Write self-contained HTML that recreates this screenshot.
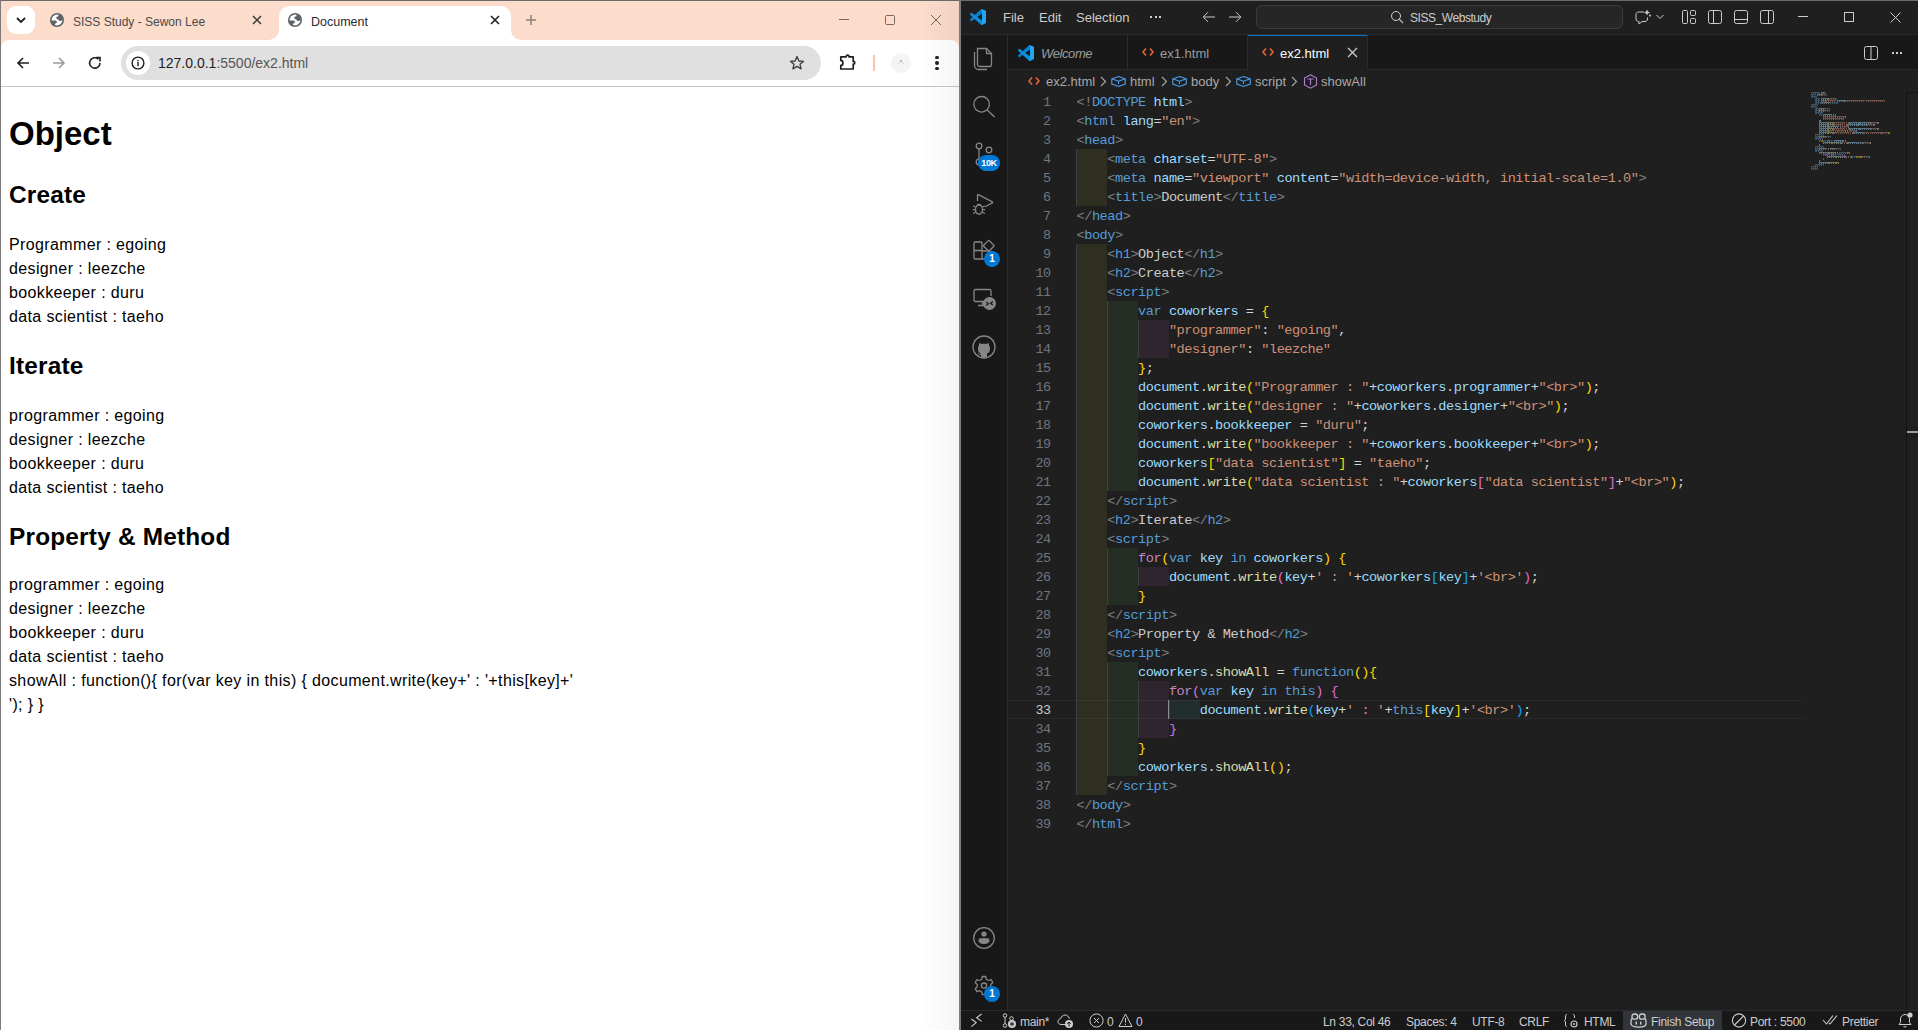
<!DOCTYPE html>
<html><head><meta charset="utf-8"><title>screen</title>
<style>
*{box-sizing:border-box;margin:0;padding:0}
html,body{width:1918px;height:1030px;overflow:hidden;background:#fff;font-family:"Liberation Sans",sans-serif}
.a{position:absolute}
svg{position:absolute;overflow:visible}
/* chrome */
#chrome{position:absolute;left:0;top:0;width:959px;height:1030px;background:#fff;overflow:hidden}
.peach{background:#fcdccb}
.pt{position:absolute;left:9px;white-space:pre;color:#000;line-height:24px;letter-spacing:0.37px}
/* vscode */
.vt{position:absolute;white-space:pre;font-size:13px;line-height:16px;color:#cccccc}
.ln{position:absolute;left:1001.5px;width:49px;height:19px;line-height:19px;font-family:"Liberation Mono",monospace;font-size:13.4px;letter-spacing:-0.5px;text-align:right}
.cl{position:absolute;height:19px;line-height:19px;white-space:pre;font-family:"Liberation Mono",monospace;font-size:13.6px;letter-spacing:-0.46px}
.ir{position:absolute;height:19px}
.mm{height:2px;background:repeating-linear-gradient(90deg,currentColor 0 1px,transparent 1px 2px),linear-gradient(currentColor,currentColor);background-size:auto,100% 1px;background-repeat:repeat,no-repeat;opacity:.45}
.ig{position:absolute;width:1px;height:19px;background:#404040}
.sb{position:absolute;top:1012px;height:20px;line-height:20px;font-size:12px;letter-spacing:-0.3px;color:#cccccc;white-space:pre}
</style></head><body>

<!-- ================= CHROME ================= -->
<div id="chrome">
  <div class="a peach" style="left:0;top:0;width:959px;height:50px"></div>

  <!-- tab search button -->
  <div class="a" style="left:7px;top:6px;width:28px;height:28px;border-radius:9px;background:#fff"></div>
  <svg style="left:15px;top:14px" width="12" height="12" viewBox="0 0 12 12"><path d="M2 4 L6 8 L10 4" fill="none" stroke="#1f1f1f" stroke-width="1.8"/></svg>

  <!-- inactive tab -->
  <svg style="left:50px;top:13px" width="14" height="14" viewBox="0 0 14 14"><defs><clipPath id="g1"><circle cx="7" cy="7" r="7"/></clipPath></defs><circle cx="7" cy="7" r="7" fill="#5f6368"/><circle cx="7" cy="7" r="5.4" fill="#fff"/><g clip-path="url(#g1)" fill="#5f6368"><path d="M8.6 1 L8.4 3.2 C7.2 3.4 6.2 3.9 6.2 5 C6.2 6 7.6 6.1 8.4 6.8 C9.2 7.6 9.6 8.4 10.6 8 L13.5 6.6 L13.5 1 Z"/><path d="M0.5 7.6 L5 7.6 C6.2 7.6 6.9 8.2 6.9 9 C6.9 9.8 6.2 10.2 5.2 10.4 L4.6 13.5 L0.5 13.5 Z"/></g></svg>
  <div class="a" style="left:73px;top:14px;font-size:12px;line-height:16px;color:#4a4a4a;white-space:pre">SISS Study - Sewon Lee</div>
  <svg style="left:252px;top:15px" width="10" height="10" viewBox="0 0 10 10"><path d="M1 1 L9 9 M9 1 L1 9" stroke="#3c3c3c" stroke-width="1.5"/></svg>

  <!-- active tab -->
  <div class="a" style="left:269px;top:30px;width:252px;height:12px;background:#fff"></div>
  <div class="a peach" style="left:267px;top:0;width:12px;height:40px;border-bottom-right-radius:10px"></div>
  <div class="a peach" style="left:511px;top:0;width:12px;height:40px;border-bottom-left-radius:10px"></div>
  <div class="a" style="left:279px;top:6px;width:232px;height:40px;border-radius:10px 10px 0 0;background:#fff"></div>
  <svg style="left:288px;top:13px" width="14" height="14" viewBox="0 0 14 14"><defs><clipPath id="g2"><circle cx="7" cy="7" r="7"/></clipPath></defs><circle cx="7" cy="7" r="7" fill="#5f6368"/><circle cx="7" cy="7" r="5.4" fill="#fff"/><g clip-path="url(#g2)" fill="#5f6368"><path d="M8.6 1 L8.4 3.2 C7.2 3.4 6.2 3.9 6.2 5 C6.2 6 7.6 6.1 8.4 6.8 C9.2 7.6 9.6 8.4 10.6 8 L13.5 6.6 L13.5 1 Z"/><path d="M0.5 7.6 L5 7.6 C6.2 7.6 6.9 8.2 6.9 9 C6.9 9.8 6.2 10.2 5.2 10.4 L4.6 13.5 L0.5 13.5 Z"/></g></svg>
  <div class="a" style="left:311px;top:13.5px;font-size:12.5px;line-height:16px;color:#2a2a2a;white-space:pre">Document</div>
  <svg style="left:490px;top:15px" width="10" height="10" viewBox="0 0 10 10"><path d="M1 1 L9 9 M9 1 L1 9" stroke="#1f1f1f" stroke-width="1.6"/></svg>

  <!-- new tab + -->
  <svg style="left:525px;top:14px" width="12" height="12" viewBox="0 0 12 12"><path d="M6 1 V11 M1 6 H11" stroke="#8a7f7a" stroke-width="1.5"/></svg>

  <!-- window controls -->
  <div class="a" style="left:839px;top:19px;width:10px;height:1px;background:#75675f"></div>
  <div class="a" style="left:885px;top:15px;width:10px;height:10px;border:1px solid #75675f;border-radius:1.5px"></div>
  <svg style="left:931px;top:15px" width="10" height="10" viewBox="0 0 10 10"><path d="M0 0 L10 10 M10 0 L0 10" stroke="#75675f" stroke-width="1"/></svg>

  <!-- toolbar -->
  <div class="a" style="left:1px;top:40px;width:958px;height:47px;background:#fff;border-radius:8px 8px 0 0"></div>
  <div class="a" style="left:1px;top:86px;width:958px;height:1px;background:#c7c7c7"></div>

  <!-- back / fwd / reload -->
  <svg style="left:15px;top:55px" width="16" height="16" viewBox="0 0 16 16"><path d="M14 8 H3 M8 3 L3 8 L8 13" fill="none" stroke="#1f1f1f" stroke-width="1.6"/></svg>
  <svg style="left:51px;top:55px" width="16" height="16" viewBox="0 0 16 16"><path d="M2 8 H13 M8 3 L13 8 L8 13" fill="none" stroke="#9a9a9a" stroke-width="1.6"/></svg>
  <svg style="left:88px;top:56px" width="14" height="14" viewBox="0 0 14 14"><path d="M12 7 A5.2 5.2 0 1 1 10.4 3.2" fill="none" stroke="#1f1f1f" stroke-width="1.6"/><path d="M8.2 1.6 H12 V5.4" fill="none" stroke="#1f1f1f" stroke-width="1.6"/></svg>

  <!-- omnibox -->
  <div class="a" style="left:121px;top:46px;width:700px;height:34px;border-radius:17px;background:#e0e0e0"></div>
  <div class="a" style="left:126px;top:51px;width:24px;height:24px;border-radius:12px;background:#fff"></div>
  <svg style="left:131px;top:56px" width="14" height="14" viewBox="0 0 14 14"><circle cx="7" cy="7" r="5.9" fill="none" stroke="#1f1f1f" stroke-width="1.4"/><rect x="6.3" y="6" width="1.4" height="4.2" fill="#1f1f1f"/><rect x="6.3" y="3.8" width="1.4" height="1.4" fill="#1f1f1f"/></svg>
  <div class="a" style="left:158px;top:55px;font-size:14px;line-height:16px;white-space:pre"><span style="color:#1f1f1f">127.0.0.1</span><span style="color:#555">:5500/ex2.html</span></div>
  <svg style="left:789px;top:55px" width="16" height="16" viewBox="0 0 16 16"><path d="M8 1.6 L9.9 6 L14.6 6.3 L11 9.3 L12.1 13.9 L8 11.4 L3.9 13.9 L5 9.3 L1.4 6.3 L6.1 6 Z" fill="none" stroke="#3c3c3c" stroke-width="1.3" stroke-linejoin="round"/></svg>

  <!-- extensions / separator / profile / menu -->
  <svg style="left:839px;top:54px" width="17" height="17" viewBox="0 0 17 17"><path d="M1.8 2.8 H7.2 C7.2 1.8 7.8 1.2 8.6 1.2 C9.4 1.2 10 1.8 10 2.8 H14.2 V7.4 C15.2 7.4 15.8 8 15.8 8.8 C15.8 9.6 15.2 10.2 14.2 10.2 V15 H1.8 V11.4 C3.2 11.4 3.9 10.3 3.9 8.9 C3.9 7.5 3.2 6.4 1.8 6.4 Z" fill="none" stroke="#1f1f1f" stroke-width="1.7" stroke-linejoin="round"/></svg>
  <div class="a" style="left:873px;top:55px;width:1.5px;height:16px;background:#f6c7ad"></div>
  <div class="a" style="left:891px;top:53px;width:20px;height:20px;border-radius:10px;background:#f4f4f4"></div>
  <svg style="left:896px;top:58px" width="10" height="8" viewBox="0 0 10 8"><path d="M2 6 L5 3 L8 6" fill="none" stroke="#dcc4c4" stroke-width="0.7"/><circle cx="5" cy="3" r="0.8" fill="#b06060"/></svg>
  <div class="a" style="left:935.4px;top:55.7px;width:3.2px;height:3.2px;border-radius:2px;background:#1f1f1f"></div>
  <div class="a" style="left:935.4px;top:61.4px;width:3.2px;height:3.2px;border-radius:2px;background:#1f1f1f"></div>
  <div class="a" style="left:935.4px;top:67.1px;width:3.2px;height:3.2px;border-radius:2px;background:#1f1f1f"></div>

  <!-- right-edge shade -->
  <div class="a" style="left:920px;top:1px;width:39px;height:1029px;background:linear-gradient(90deg,rgba(0,0,0,0),rgba(0,0,0,0.04))"></div>

  <!-- page content -->
<div class="pt" style="top:113.5px;font-size:33px;font-weight:bold;line-height:40px;letter-spacing:0">Object</div>
<div class="pt" style="top:180px;font-size:24.4px;font-weight:bold;line-height:30px;letter-spacing:0.2px">Create</div>
<div class="pt" style="top:232.5px;font-size:16px;font-weight:normal">Programmer : egoing</div>
<div class="pt" style="top:256.5px;font-size:16px;font-weight:normal">designer : leezche</div>
<div class="pt" style="top:280.5px;font-size:16px;font-weight:normal">bookkeeper : duru</div>
<div class="pt" style="top:304.5px;font-size:16px;font-weight:normal">data scientist : taeho</div>
<div class="pt" style="top:351px;font-size:24.4px;font-weight:bold;line-height:30px;letter-spacing:0.2px">Iterate</div>
<div class="pt" style="top:403.5px;font-size:16px;font-weight:normal">programmer : egoing</div>
<div class="pt" style="top:427.5px;font-size:16px;font-weight:normal">designer : leezche</div>
<div class="pt" style="top:451.5px;font-size:16px;font-weight:normal">bookkeeper : duru</div>
<div class="pt" style="top:475.5px;font-size:16px;font-weight:normal">data scientist : taeho</div>
<div class="pt" style="top:522px;font-size:24.4px;font-weight:bold;line-height:30px;letter-spacing:0.2px">Property &amp; Method</div>
<div class="pt" style="top:572.5px;font-size:16px;font-weight:normal">programmer : egoing</div>
<div class="pt" style="top:596.5px;font-size:16px;font-weight:normal">designer : leezche</div>
<div class="pt" style="top:620.5px;font-size:16px;font-weight:normal">bookkeeper : duru</div>
<div class="pt" style="top:644.5px;font-size:16px;font-weight:normal">data scientist : taeho</div>
<div class="pt" style="top:668.5px;font-size:16px;font-weight:normal">showAll : function(){ for(var key in this) { document.write(key+' : '+this[key]+'</div>
<div class="pt" style="top:692.5px;font-size:16px;font-weight:normal">'); } }</div>
  <!-- window top/left border -->
  <div class="a" style="left:0;top:0;width:959px;height:1px;background:#6b6b6b"></div>
  <div class="a" style="left:0;top:0;width:1px;height:1030px;background:#7a7a7a"></div>
</div>

<!-- ================= VS CODE ================= -->
<div class="a" style="left:959px;top:0;width:2px;height:1030px;background:#7d7d7d"></div>
<div class="a" style="left:961px;top:0;width:957px;height:1px;background:#6b6b6b"></div>
<div class="a" style="left:961px;top:1px;width:957px;height:1029px;background:#1f1f1f"></div>
<!-- title bar -->
<svg style="left:970px;top:9px" width="16" height="16" viewBox="0 0 100 100"><path d="M96.46 10.8L75.86 0.87C73.47-0.28 70.62 0.2 68.75 2.08L1.3 63.58C-0.52 65.23-0.52 68.1 1.3 69.76L6.81 74.77C8.3 76.12 10.53 76.22 12.13 75.01L93.36 13.37C96.09 11.3 100 13.25 100 16.67V16.43C100 14.03 98.62 11.84 96.46 10.8Z" fill="#0a7fd0"/><path d="M96.46 89.2L75.86 99.13C73.47 100.28 70.62 99.8 68.75 97.92L1.3 36.42C-0.52 34.77-0.52 31.9 1.3 30.24L6.81 25.23C8.3 23.88 10.53 23.78 12.13 24.99L93.36 86.63C96.09 88.7 100 86.75 100 83.33V83.57C100 85.97 98.62 88.16 96.46 89.2Z" fill="#0c8ee0"/><path d="M75.86 99.13C73.47 100.28 70.62 99.8 68.75 97.92C71.06 100.23 75 98.6 75 95.33V4.67C75 1.4 71.06-0.23 68.75 2.08C70.62 0.2 73.47-0.28 75.86 0.87L96.46 10.79C98.62 11.83 100 14.02 100 16.42V83.58C100 85.98 98.62 88.17 96.46 89.21L75.86 99.13Z" fill="#22a6f2"/></svg>
<div class="vt" style="left:1003px;top:10px">File</div>
<div class="vt" style="left:1039px;top:10px">Edit</div>
<div class="vt" style="left:1076px;top:10px">Selection</div>
<div class="a" style="left:1150px;top:16px;width:2px;height:2px;background:#cccccc"></div>
<div class="a" style="left:1154.5px;top:16px;width:2px;height:2px;background:#cccccc"></div>
<div class="a" style="left:1159px;top:16px;width:2px;height:2px;background:#cccccc"></div>
<svg style="left:1202px;top:11px" width="14" height="12" viewBox="0 0 14 12"><path d="M13 6 H1.5 M6 1.2 L1.2 6 L6 10.8" fill="none" stroke="#cccccc" stroke-width="1"/></svg>
<svg style="left:1228px;top:11px" width="14" height="12" viewBox="0 0 14 12"><path d="M1 6 H12.5 M8 1.2 L12.8 6 L8 10.8" fill="none" stroke="#cccccc" stroke-width="1"/></svg>
<div class="a" style="left:1256px;top:5px;width:367px;height:24px;border:1px solid #3c3c3c;border-radius:6px;background:#262626"></div>
<svg style="left:1390px;top:10px" width="14" height="14" viewBox="0 0 14 14"><circle cx="6" cy="6" r="4.5" fill="none" stroke="#cccccc" stroke-width="1"/><path d="M9.2 9.2 L13 13" stroke="#cccccc" stroke-width="1.1"/></svg>
<div class="vt" style="left:1410px;top:10px;font-size:12px;letter-spacing:-0.45px">SISS_Webstudy</div>
<!-- copilot -->
<svg style="left:1634px;top:9px" width="32" height="16" viewBox="0 0 32 16"><path d="M10 3 H4.5 C3.1 3 2 4.1 2 5.5 V10 C2 11.4 3.1 12.5 4.5 12.5 H5 V15 L8 12.5 H11 C12.4 12.5 13.5 11.4 13.5 10 V8.5" fill="none" stroke="#cccccc" stroke-width="1"/><path d="M13 0.5 L13.9 2.6 L16 3.5 L13.9 4.4 L13 6.5 L12.1 4.4 L10 3.5 L12.1 2.6 Z" fill="#cccccc"/><path d="M16 5 L17 6.5 L16 8 L15 6.5 Z" fill="#cccccc"/><path d="M22.5 6 L26 9.5 L29.5 6" fill="none" stroke="#cccccc" stroke-width="1"/></svg>
<!-- layout icons -->
<svg style="left:1681px;top:9px" width="16" height="16" viewBox="0 0 16 16"><rect x="1.5" y="1.5" width="5" height="13" rx="1" fill="none" stroke="#cccccc"/><rect x="9.5" y="1.5" width="5" height="5" rx="1" fill="none" stroke="#cccccc"/><rect x="9.5" y="9.5" width="5" height="5" rx="1" fill="none" stroke="#cccccc"/></svg>
<svg style="left:1707px;top:9px" width="16" height="16" viewBox="0 0 16 16"><rect x="1.5" y="1.5" width="13" height="13" rx="2" fill="none" stroke="#cccccc"/><path d="M6.5 1.5 V14.5" stroke="#cccccc"/></svg>
<svg style="left:1733px;top:9px" width="16" height="16" viewBox="0 0 16 16"><rect x="1.5" y="1.5" width="13" height="13" rx="2" fill="none" stroke="#cccccc"/><path d="M1.5 10.5 H14.5" stroke="#cccccc"/></svg>
<svg style="left:1759px;top:9px" width="16" height="16" viewBox="0 0 16 16"><rect x="1.5" y="1.5" width="13" height="13" rx="2" fill="none" stroke="#cccccc"/><path d="M9.5 1.5 V14.5" stroke="#cccccc"/></svg>
<!-- window controls -->
<div class="a" style="left:1798px;top:16px;width:10px;height:1px;background:#cccccc"></div>
<div class="a" style="left:1844px;top:12px;width:10px;height:10px;border:1px solid #cccccc"></div>
<svg style="left:1890px;top:12px" width="11" height="11" viewBox="0 0 11 11"><path d="M0.5 0.5 L10.5 10.5 M10.5 0.5 L0.5 10.5" stroke="#cccccc" stroke-width="1"/></svg>
<div class="a" style="left:961px;top:34px;width:957px;height:1px;background:#2b2b2b"></div>

<!-- activity bar -->
<div class="a" style="left:961px;top:35px;width:46px;height:975px;background:#181818"></div>
<div class="a" style="left:1007px;top:35px;width:1px;height:975px;background:#2b2b2b"></div>

<svg style="left:972px;top:44px" width="24" height="26" viewBox="0 0 24 26"><path d="M5.5 4.5 H14.5 L19.5 9.5 V20.5 C19.5 21.6 18.6 22.5 17.5 22.5 H7.5 C6.4 22.5 5.5 21.6 5.5 20.5 Z" fill="none" stroke="#868686" stroke-width="1.3"/><path d="M14.5 4.5 V9.5 H19.5" fill="none" stroke="#868686" stroke-width="1.3"/><path d="M2.5 8 V21.5 C2.5 23.7 4.3 25.5 6.5 25.5 H15" fill="none" stroke="#868686" stroke-width="1.3"/></svg>
<svg style="left:972px;top:94px" width="24" height="24" viewBox="0 0 24 24"><circle cx="9.6" cy="10.3" r="7.8" fill="none" stroke="#868686" stroke-width="1.3"/><path d="M15.2 15.9 L22.6 23" stroke="#868686" stroke-width="1.4"/></svg>
<svg style="left:972px;top:142px" width="24" height="24" viewBox="0 0 24 24"><circle cx="7" cy="4" r="2.8" fill="none" stroke="#868686" stroke-width="1.3"/><circle cx="17" cy="8" r="2.8" fill="none" stroke="#868686" stroke-width="1.3"/><circle cx="7" cy="20" r="2.8" fill="none" stroke="#868686" stroke-width="1.3"/><path d="M7 6.8 V17.2" stroke="#868686" stroke-width="1.3"/></svg>
<div class="a" style="left:978px;top:155px;width:22px;height:16px;border-radius:8px;background:#0078d4;color:#fff;font-size:9px;line-height:16px;font-weight:bold;text-align:center;letter-spacing:-0.4px">10K</div>
<svg style="left:972px;top:190px" width="24" height="24" viewBox="0 0 24 24"><path d="M5.5 11 V5.2 Q5.5 4.2 6.4 4.7 L20.3 11.8 Q21 12.4 20.3 12.9 L13.2 16.8" fill="none" stroke="#868686" stroke-width="1.3" stroke-linejoin="round"/><ellipse cx="7" cy="19.6" rx="3.5" ry="4.5" fill="none" stroke="#868686" stroke-width="1.3"/><path d="M4.6 15.6 Q7 13.2 9.4 15.6 M1.2 15.8 L3.8 17.3 M1.2 23.6 L3.8 22 M12.8 15.8 L10.2 17.3 M12.8 23.6 L10.2 22 M0.8 19.6 H3.5 M10.5 19.6 H13.2" fill="none" stroke="#868686" stroke-width="1.2"/></svg>
<svg style="left:972px;top:239px" width="24" height="24" viewBox="0 0 24 24"><path d="M3.2 3 H8.8 Q10 3 10 4.2 V20 H3.2 Q2 20 2 18.8 V4.2 Q2 3 3.2 3 Z M2 11.5 H10 M10 12 H17.8 Q19 12 19 13.2 V18.8 Q19 20 17.8 20 H10" fill="none" stroke="#868686" stroke-width="1.3"/><path d="M16.3 1.6 Q16.8 1.1 17.3 1.6 L21.9 6.2 Q22.4 6.7 21.9 7.2 L17.3 11.8 Q16.8 12.3 16.3 11.8 L11.7 7.2 Q11.2 6.7 11.7 6.2 Z" fill="none" stroke="#868686" stroke-width="1.3"/></svg>
<div class="a" style="left:984px;top:251px;width:16px;height:16px;border-radius:8px;background:#0078d4;color:#fff;font-size:10px;line-height:16px;font-weight:bold;text-align:center">1</div>
<svg style="left:972px;top:287px" width="24" height="24" viewBox="0 0 24 24"><path d="M13 14.5 H3.5 C2.7 14.5 2 13.8 2 13 V4 C2 3.2 2.7 2.5 3.5 2.5 H17.5 C18.3 2.5 19 3.2 19 4 V9" fill="none" stroke="#868686" stroke-width="1.3"/><path d="M10.5 14.5 V18.5 M6 18.5 H13" stroke="#868686" stroke-width="1.3"/><circle cx="17.5" cy="16.5" r="6.5" fill="#868686"/><path d="M14.2 15 L16.4 16.8 L14.2 18.6 M20.8 14.4 L18.6 16.2 L20.8 18" fill="none" stroke="#181818" stroke-width="1.3"/></svg>
<svg style="left:972px;top:335px" width="24" height="24" viewBox="0 0 24 24"><circle cx="12" cy="12" r="11" fill="none" stroke="#868686" stroke-width="1.3"/><path d="M9 22.5 V18.5 C7.5 18.2 6 17 6 13.5 C6 12.2 6.4 11.3 7.1 10.6 C6.9 10 6.8 9 7.2 8 C7.2 8 8.2 8 9.6 9.1 C11.1 8.7 12.9 8.7 14.4 9.1 C15.8 8 16.8 8 16.8 8 C17.2 9 17.1 10 16.9 10.6 C17.6 11.3 18 12.2 18 13.5 C18 17 16.5 18.2 15 18.5 V22.5 Z" fill="#868686"/><path d="M9 19.5 C7.5 20 6.5 19 6 18" fill="none" stroke="#868686" stroke-width="1"/></svg>
<svg style="left:972px;top:926px" width="24" height="24" viewBox="0 0 24 24"><circle cx="12" cy="12" r="10.3" fill="none" stroke="#868686" stroke-width="1.3"/><circle cx="12" cy="8" r="2.6" fill="#868686"/><path d="M6.5 14.5 C6.5 12.8 7.5 12.3 9 12.3 H15 C16.5 12.3 17.5 12.8 17.5 14.5 C17.5 16.5 15 18 12 18 C9 18 6.5 16.5 6.5 14.5 Z" fill="#868686"/></svg>
<svg style="left:972px;top:974px" width="24" height="24" viewBox="0 0 24 24"><path d="M10.3 2.5 H13.7 L14.3 5.3 L16.4 6.5 L19.1 5.6 L20.8 8.5 L18.7 10.4 V12.8 L20.8 14.7 L19.1 17.6 L16.4 16.7 L14.3 17.9 L13.7 20.7 H10.3 L9.7 17.9 L7.6 16.7 L4.9 17.6 L3.2 14.7 L5.3 12.8 V10.4 L3.2 8.5 L4.9 5.6 L7.6 6.5 L9.7 5.3 Z" fill="none" stroke="#868686" stroke-width="1.3" stroke-linejoin="round"/><circle cx="12" cy="11.6" r="2.6" fill="none" stroke="#868686" stroke-width="1.3"/></svg>
<div class="a" style="left:984px;top:986px;width:16px;height:16px;border-radius:8px;background:#0078d4;color:#fff;font-size:10px;line-height:16px;font-weight:bold;text-align:center">1</div>


<!-- tab bar -->
<div class="a" style="left:1008px;top:35px;width:910px;height:34px;background:#181818"></div>
<div class="a" style="left:1008px;top:69px;width:910px;height:1px;background:#2b2b2b"></div>
<!-- tab Welcome -->
<div class="a" style="left:1127px;top:35px;width:1px;height:34px;background:#2b2b2b"></div>
<svg style="left:1018px;top:45px" width="16" height="16" viewBox="0 0 100 100"><path d="M96.46 10.8L75.86 0.87C73.47-0.28 70.62 0.2 68.75 2.08L1.3 63.58C-0.52 65.23-0.52 68.1 1.3 69.76L6.81 74.77C8.3 76.12 10.53 76.22 12.13 75.01L93.36 13.37C96.09 11.3 100 13.25 100 16.67V16.43C100 14.03 98.62 11.84 96.46 10.8Z" fill="#0a7fd0"/><path d="M96.46 89.2L75.86 99.13C73.47 100.28 70.62 99.8 68.75 97.92L1.3 36.42C-0.52 34.77-0.52 31.9 1.3 30.24L6.81 25.23C8.3 23.88 10.53 23.78 12.13 24.99L93.36 86.63C96.09 88.7 100 86.75 100 83.33V83.57C100 85.97 98.62 88.16 96.46 89.2Z" fill="#0c8ee0"/><path d="M75.86 99.13C73.47 100.28 70.62 99.8 68.75 97.92C71.06 100.23 75 98.6 75 95.33V4.67C75 1.4 71.06-0.23 68.75 2.08C70.62 0.2 73.47-0.28 75.86 0.87L96.46 10.79C98.62 11.83 100 14.02 100 16.42V83.58C100 85.98 98.62 88.17 96.46 89.21L75.86 99.13Z" fill="#22a6f2"/></svg>
<div class="vt" style="left:1041px;top:45.5px;font-style:italic;color:#9d9d9d;letter-spacing:-0.4px">Welcome</div>
<!-- tab ex1 -->
<div class="a" style="left:1247px;top:35px;width:1px;height:34px;background:#2b2b2b"></div>
<svg style="left:1142px;top:46px" width="12" height="12" viewBox="0 0 12 12"><path d="M4 2.5 L1 6 L4 9.5 M8 2.5 L11 6 L8 9.5" fill="none" stroke="#e8643a" stroke-width="1.6"/></svg>
<div class="vt" style="left:1160px;top:45.5px;color:#9d9d9d">ex1.html</div>
<!-- tab ex2 active -->
<div class="a" style="left:1248px;top:35px;width:119px;height:35px;background:#1f1f1f"></div>
<div class="a" style="left:1248px;top:35px;width:119px;height:1px;background:#0078d4"></div>
<div class="a" style="left:1367px;top:35px;width:1px;height:34px;background:#2b2b2b"></div>
<svg style="left:1262px;top:46px" width="12" height="12" viewBox="0 0 12 12"><path d="M4 2.5 L1 6 L4 9.5 M8 2.5 L11 6 L8 9.5" fill="none" stroke="#e8643a" stroke-width="1.6"/></svg>
<div class="vt" style="left:1280px;top:45.5px;color:#ffffff">ex2.html</div>
<svg style="left:1347px;top:47px" width="11" height="11" viewBox="0 0 11 11"><path d="M1 1 L10 10 M10 1 L1 10" stroke="#cccccc" stroke-width="1.3"/></svg>
<!-- split / more -->
<svg style="left:1863px;top:45px" width="16" height="16" viewBox="0 0 16 16"><rect x="1.5" y="1.5" width="13" height="13" rx="2" fill="none" stroke="#cccccc"/><path d="M8 1.5 V14.5" stroke="#cccccc"/></svg>
<div class="a" style="left:1892px;top:52px;width:2px;height:2px;background:#cccccc"></div>
<div class="a" style="left:1896px;top:52px;width:2px;height:2px;background:#cccccc"></div>
<div class="a" style="left:1900px;top:52px;width:2px;height:2px;background:#cccccc"></div>

<!-- breadcrumbs -->
<svg style="left:1028px;top:75px" width="12" height="12" viewBox="0 0 12 12"><path d="M4 2.5 L1 6 L4 9.5 M8 2.5 L11 6 L8 9.5" fill="none" stroke="#e8643a" stroke-width="1.6"/></svg>
<div class="vt" style="left:1046px;top:74px;color:#a9a9a9">ex2.html</div>
<svg style="left:1100px;top:76px" width="7" height="11" viewBox="0 0 7 11"><path d="M1 1 L5.5 5.5 L1 10" fill="none" stroke="#a9a9a9" stroke-width="1.1"/></svg><svg style="left:1111px;top:76px" width="15" height="11" viewBox="0 0 15 11"><path d="M7.5 0.6 L14.2 2.8 V8 L7.5 10.4 L0.8 8 V2.8 Z" fill="none" stroke="#4aa2f5" stroke-width="1.1"/><path d="M0.8 2.8 L7.5 5.2 L14.2 2.8 M7.5 5.2 V8" fill="none" stroke="#4aa2f5" stroke-width="1.1"/></svg><div class="vt" style="left:1130px;top:74px;color:#a9a9a9">html</div><svg style="left:1161px;top:76px" width="7" height="11" viewBox="0 0 7 11"><path d="M1 1 L5.5 5.5 L1 10" fill="none" stroke="#a9a9a9" stroke-width="1.1"/></svg><svg style="left:1172px;top:76px" width="15" height="11" viewBox="0 0 15 11"><path d="M7.5 0.6 L14.2 2.8 V8 L7.5 10.4 L0.8 8 V2.8 Z" fill="none" stroke="#4aa2f5" stroke-width="1.1"/><path d="M0.8 2.8 L7.5 5.2 L14.2 2.8 M7.5 5.2 V8" fill="none" stroke="#4aa2f5" stroke-width="1.1"/></svg><div class="vt" style="left:1191px;top:74px;color:#a9a9a9">body</div><svg style="left:1225px;top:76px" width="7" height="11" viewBox="0 0 7 11"><path d="M1 1 L5.5 5.5 L1 10" fill="none" stroke="#a9a9a9" stroke-width="1.1"/></svg><svg style="left:1236px;top:76px" width="15" height="11" viewBox="0 0 15 11"><path d="M7.5 0.6 L14.2 2.8 V8 L7.5 10.4 L0.8 8 V2.8 Z" fill="none" stroke="#4aa2f5" stroke-width="1.1"/><path d="M0.8 2.8 L7.5 5.2 L14.2 2.8 M7.5 5.2 V8" fill="none" stroke="#4aa2f5" stroke-width="1.1"/></svg><div class="vt" style="left:1255px;top:74px;color:#a9a9a9">script</div><svg style="left:1291px;top:76px" width="7" height="11" viewBox="0 0 7 11"><path d="M1 1 L5.5 5.5 L1 10" fill="none" stroke="#a9a9a9" stroke-width="1.1"/></svg><svg style="left:1303px;top:74px" width="15" height="15" viewBox="0 0 15 15"><path d="M7.5 0.8 L13.5 4 V11 L7.5 14.2 L1.5 11 V4 Z" fill="none" stroke="#b180d7" stroke-width="1.1"/><path d="M4.5 5 H10.5 M7.5 5 V11" fill="none" stroke="#b180d7" stroke-width="1.1"/></svg><div class="vt" style="left:1321px;top:74px;color:#a9a9a9">showAll</div>

<!-- code -->
<div class="a" style="left:1008px;top:700px;width:796px;height:19px;border-top:1px solid #282828;border-bottom:1px solid #282828"></div>
<div class="ln" style="top:93px;color:#6e7681">1</div>
<div class="cl" style="left:1076.5px;top:93px"><span style="color:#808080">&lt;!</span><span style="color:#569cd6">DOCTYPE</span><span style="color:#d4d4d4"> </span><span style="color:#9cdcfe">html</span><span style="color:#808080">&gt;</span></div>
<div class="ln" style="top:112px;color:#6e7681">2</div>
<div class="cl" style="left:1076.5px;top:112px"><span style="color:#808080">&lt;</span><span style="color:#569cd6">html</span><span style="color:#d4d4d4"> </span><span style="color:#9cdcfe">lang</span><span style="color:#d4d4d4">=</span><span style="color:#ce9178">"en"</span><span style="color:#808080">&gt;</span></div>
<div class="ln" style="top:131px;color:#6e7681">3</div>
<div class="cl" style="left:1076.5px;top:131px"><span style="color:#808080">&lt;</span><span style="color:#569cd6">head</span><span style="color:#808080">&gt;</span></div>
<div class="ir" style="left:1076.5px;top:149px;width:30.8px;background:rgba(255,255,64,0.07)"></div>
<div class="ig" style="left:1076px;top:149px"></div>
<div class="ln" style="top:150px;color:#6e7681">4</div>
<div class="cl" style="left:1107.3px;top:150px"><span style="color:#808080">&lt;</span><span style="color:#569cd6">meta</span><span style="color:#d4d4d4"> </span><span style="color:#9cdcfe">charset</span><span style="color:#d4d4d4">=</span><span style="color:#ce9178">"UTF-8"</span><span style="color:#808080">&gt;</span></div>
<div class="ir" style="left:1076.5px;top:168px;width:30.8px;background:rgba(255,255,64,0.07)"></div>
<div class="ig" style="left:1076px;top:168px"></div>
<div class="ln" style="top:169px;color:#6e7681">5</div>
<div class="cl" style="left:1107.3px;top:169px"><span style="color:#808080">&lt;</span><span style="color:#569cd6">meta</span><span style="color:#d4d4d4"> </span><span style="color:#9cdcfe">name</span><span style="color:#d4d4d4">=</span><span style="color:#ce9178">"viewport"</span><span style="color:#d4d4d4"> </span><span style="color:#9cdcfe">content</span><span style="color:#d4d4d4">=</span><span style="color:#ce9178">"width=device-width, initial-scale=1.0"</span><span style="color:#808080">&gt;</span></div>
<div class="ir" style="left:1076.5px;top:187px;width:30.8px;background:rgba(255,255,64,0.07)"></div>
<div class="ig" style="left:1076px;top:187px"></div>
<div class="ln" style="top:188px;color:#6e7681">6</div>
<div class="cl" style="left:1107.3px;top:188px"><span style="color:#808080">&lt;</span><span style="color:#569cd6">title</span><span style="color:#808080">&gt;</span><span style="color:#cccccc">Document</span><span style="color:#808080">&lt;/</span><span style="color:#569cd6">title</span><span style="color:#808080">&gt;</span></div>
<div class="ln" style="top:207px;color:#6e7681">7</div>
<div class="cl" style="left:1076.5px;top:207px"><span style="color:#808080">&lt;/</span><span style="color:#569cd6">head</span><span style="color:#808080">&gt;</span></div>
<div class="ln" style="top:226px;color:#6e7681">8</div>
<div class="cl" style="left:1076.5px;top:226px"><span style="color:#808080">&lt;</span><span style="color:#569cd6">body</span><span style="color:#808080">&gt;</span></div>
<div class="ir" style="left:1076.5px;top:244px;width:30.8px;background:rgba(255,255,64,0.07)"></div>
<div class="ig" style="left:1076px;top:244px"></div>
<div class="ln" style="top:245px;color:#6e7681">9</div>
<div class="cl" style="left:1107.3px;top:245px"><span style="color:#808080">&lt;</span><span style="color:#569cd6">h1</span><span style="color:#808080">&gt;</span><span style="color:#cccccc">Object</span><span style="color:#808080">&lt;/</span><span style="color:#569cd6">h1</span><span style="color:#808080">&gt;</span></div>
<div class="ir" style="left:1076.5px;top:263px;width:30.8px;background:rgba(255,255,64,0.07)"></div>
<div class="ig" style="left:1076px;top:263px"></div>
<div class="ln" style="top:264px;color:#6e7681">10</div>
<div class="cl" style="left:1107.3px;top:264px"><span style="color:#808080">&lt;</span><span style="color:#569cd6">h2</span><span style="color:#808080">&gt;</span><span style="color:#cccccc">Create</span><span style="color:#808080">&lt;/</span><span style="color:#569cd6">h2</span><span style="color:#808080">&gt;</span></div>
<div class="ir" style="left:1076.5px;top:282px;width:30.8px;background:rgba(255,255,64,0.07)"></div>
<div class="ig" style="left:1076px;top:282px"></div>
<div class="ln" style="top:283px;color:#6e7681">11</div>
<div class="cl" style="left:1107.3px;top:283px"><span style="color:#808080">&lt;</span><span style="color:#569cd6">script</span><span style="color:#808080">&gt;</span></div>
<div class="ir" style="left:1076.5px;top:301px;width:30.8px;background:rgba(255,255,64,0.07)"></div>
<div class="ig" style="left:1076px;top:301px"></div>
<div class="ir" style="left:1107.3px;top:301px;width:30.8px;background:rgba(127,255,127,0.07)"></div>
<div class="ig" style="left:1107px;top:301px"></div>
<div class="ln" style="top:302px;color:#6e7681">12</div>
<div class="cl" style="left:1138.1px;top:302px"><span style="color:#569cd6">var</span><span style="color:#d4d4d4"> </span><span style="color:#9cdcfe">coworkers</span><span style="color:#d4d4d4"> = </span><span style="color:#ffd700">{</span></div>
<div class="ir" style="left:1076.5px;top:320px;width:30.8px;background:rgba(255,255,64,0.07)"></div>
<div class="ig" style="left:1076px;top:320px"></div>
<div class="ir" style="left:1107.3px;top:320px;width:30.8px;background:rgba(127,255,127,0.07)"></div>
<div class="ig" style="left:1107px;top:320px"></div>
<div class="ir" style="left:1138.1px;top:320px;width:30.8px;background:rgba(255,127,255,0.07)"></div>
<div class="ig" style="left:1138px;top:320px"></div>
<div class="ln" style="top:321px;color:#6e7681">13</div>
<div class="cl" style="left:1168.9px;top:321px"><span style="color:#ce9178">"programmer"</span><span style="color:#d4d4d4">: </span><span style="color:#ce9178">"egoing"</span><span style="color:#d4d4d4">,</span></div>
<div class="ir" style="left:1076.5px;top:339px;width:30.8px;background:rgba(255,255,64,0.07)"></div>
<div class="ig" style="left:1076px;top:339px"></div>
<div class="ir" style="left:1107.3px;top:339px;width:30.8px;background:rgba(127,255,127,0.07)"></div>
<div class="ig" style="left:1107px;top:339px"></div>
<div class="ir" style="left:1138.1px;top:339px;width:30.8px;background:rgba(255,127,255,0.07)"></div>
<div class="ig" style="left:1138px;top:339px"></div>
<div class="ln" style="top:340px;color:#6e7681">14</div>
<div class="cl" style="left:1168.9px;top:340px"><span style="color:#ce9178">"designer"</span><span style="color:#d4d4d4">: </span><span style="color:#ce9178">"leezche"</span></div>
<div class="ir" style="left:1076.5px;top:358px;width:30.8px;background:rgba(255,255,64,0.07)"></div>
<div class="ig" style="left:1076px;top:358px"></div>
<div class="ir" style="left:1107.3px;top:358px;width:30.8px;background:rgba(127,255,127,0.07)"></div>
<div class="ig" style="left:1107px;top:358px"></div>
<div class="ln" style="top:359px;color:#6e7681">15</div>
<div class="cl" style="left:1138.1px;top:359px"><span style="color:#ffd700">}</span><span style="color:#d4d4d4">;</span></div>
<div class="ir" style="left:1076.5px;top:377px;width:30.8px;background:rgba(255,255,64,0.07)"></div>
<div class="ig" style="left:1076px;top:377px"></div>
<div class="ir" style="left:1107.3px;top:377px;width:30.8px;background:rgba(127,255,127,0.07)"></div>
<div class="ig" style="left:1107px;top:377px"></div>
<div class="ln" style="top:378px;color:#6e7681">16</div>
<div class="cl" style="left:1138.1px;top:378px"><span style="color:#9cdcfe">document</span><span style="color:#d4d4d4">.</span><span style="color:#dcdcaa">write</span><span style="color:#ffd700">(</span><span style="color:#ce9178">"Programmer : "</span><span style="color:#d4d4d4">+</span><span style="color:#9cdcfe">coworkers</span><span style="color:#d4d4d4">.</span><span style="color:#9cdcfe">programmer</span><span style="color:#d4d4d4">+</span><span style="color:#ce9178">"&lt;br&gt;"</span><span style="color:#ffd700">)</span><span style="color:#d4d4d4">;</span></div>
<div class="ir" style="left:1076.5px;top:396px;width:30.8px;background:rgba(255,255,64,0.07)"></div>
<div class="ig" style="left:1076px;top:396px"></div>
<div class="ir" style="left:1107.3px;top:396px;width:30.8px;background:rgba(127,255,127,0.07)"></div>
<div class="ig" style="left:1107px;top:396px"></div>
<div class="ln" style="top:397px;color:#6e7681">17</div>
<div class="cl" style="left:1138.1px;top:397px"><span style="color:#9cdcfe">document</span><span style="color:#d4d4d4">.</span><span style="color:#dcdcaa">write</span><span style="color:#ffd700">(</span><span style="color:#ce9178">"designer : "</span><span style="color:#d4d4d4">+</span><span style="color:#9cdcfe">coworkers</span><span style="color:#d4d4d4">.</span><span style="color:#9cdcfe">designer</span><span style="color:#d4d4d4">+</span><span style="color:#ce9178">"&lt;br&gt;"</span><span style="color:#ffd700">)</span><span style="color:#d4d4d4">;</span></div>
<div class="ir" style="left:1076.5px;top:415px;width:30.8px;background:rgba(255,255,64,0.07)"></div>
<div class="ig" style="left:1076px;top:415px"></div>
<div class="ir" style="left:1107.3px;top:415px;width:30.8px;background:rgba(127,255,127,0.07)"></div>
<div class="ig" style="left:1107px;top:415px"></div>
<div class="ln" style="top:416px;color:#6e7681">18</div>
<div class="cl" style="left:1138.1px;top:416px"><span style="color:#9cdcfe">coworkers</span><span style="color:#d4d4d4">.</span><span style="color:#9cdcfe">bookkeeper</span><span style="color:#d4d4d4"> = </span><span style="color:#ce9178">"duru"</span><span style="color:#d4d4d4">;</span></div>
<div class="ir" style="left:1076.5px;top:434px;width:30.8px;background:rgba(255,255,64,0.07)"></div>
<div class="ig" style="left:1076px;top:434px"></div>
<div class="ir" style="left:1107.3px;top:434px;width:30.8px;background:rgba(127,255,127,0.07)"></div>
<div class="ig" style="left:1107px;top:434px"></div>
<div class="ln" style="top:435px;color:#6e7681">19</div>
<div class="cl" style="left:1138.1px;top:435px"><span style="color:#9cdcfe">document</span><span style="color:#d4d4d4">.</span><span style="color:#dcdcaa">write</span><span style="color:#ffd700">(</span><span style="color:#ce9178">"bookkeeper : "</span><span style="color:#d4d4d4">+</span><span style="color:#9cdcfe">coworkers</span><span style="color:#d4d4d4">.</span><span style="color:#9cdcfe">bookkeeper</span><span style="color:#d4d4d4">+</span><span style="color:#ce9178">"&lt;br&gt;"</span><span style="color:#ffd700">)</span><span style="color:#d4d4d4">;</span></div>
<div class="ir" style="left:1076.5px;top:453px;width:30.8px;background:rgba(255,255,64,0.07)"></div>
<div class="ig" style="left:1076px;top:453px"></div>
<div class="ir" style="left:1107.3px;top:453px;width:30.8px;background:rgba(127,255,127,0.07)"></div>
<div class="ig" style="left:1107px;top:453px"></div>
<div class="ln" style="top:454px;color:#6e7681">20</div>
<div class="cl" style="left:1138.1px;top:454px"><span style="color:#9cdcfe">coworkers</span><span style="color:#ffd700">[</span><span style="color:#ce9178">"data scientist"</span><span style="color:#ffd700">]</span><span style="color:#d4d4d4"> = </span><span style="color:#ce9178">"taeho"</span><span style="color:#d4d4d4">;</span></div>
<div class="ir" style="left:1076.5px;top:472px;width:30.8px;background:rgba(255,255,64,0.07)"></div>
<div class="ig" style="left:1076px;top:472px"></div>
<div class="ir" style="left:1107.3px;top:472px;width:30.8px;background:rgba(127,255,127,0.07)"></div>
<div class="ig" style="left:1107px;top:472px"></div>
<div class="ln" style="top:473px;color:#6e7681">21</div>
<div class="cl" style="left:1138.1px;top:473px"><span style="color:#9cdcfe">document</span><span style="color:#d4d4d4">.</span><span style="color:#dcdcaa">write</span><span style="color:#ffd700">(</span><span style="color:#ce9178">"data scientist : "</span><span style="color:#d4d4d4">+</span><span style="color:#9cdcfe">coworkers</span><span style="color:#da70d6">[</span><span style="color:#ce9178">"data scientist"</span><span style="color:#da70d6">]</span><span style="color:#d4d4d4">+</span><span style="color:#ce9178">"&lt;br&gt;"</span><span style="color:#ffd700">)</span><span style="color:#d4d4d4">;</span></div>
<div class="ir" style="left:1076.5px;top:491px;width:30.8px;background:rgba(255,255,64,0.07)"></div>
<div class="ig" style="left:1076px;top:491px"></div>
<div class="ln" style="top:492px;color:#6e7681">22</div>
<div class="cl" style="left:1107.3px;top:492px"><span style="color:#808080">&lt;/</span><span style="color:#569cd6">script</span><span style="color:#808080">&gt;</span></div>
<div class="ir" style="left:1076.5px;top:510px;width:30.8px;background:rgba(255,255,64,0.07)"></div>
<div class="ig" style="left:1076px;top:510px"></div>
<div class="ln" style="top:511px;color:#6e7681">23</div>
<div class="cl" style="left:1107.3px;top:511px"><span style="color:#808080">&lt;</span><span style="color:#569cd6">h2</span><span style="color:#808080">&gt;</span><span style="color:#cccccc">Iterate</span><span style="color:#808080">&lt;/</span><span style="color:#569cd6">h2</span><span style="color:#808080">&gt;</span></div>
<div class="ir" style="left:1076.5px;top:529px;width:30.8px;background:rgba(255,255,64,0.07)"></div>
<div class="ig" style="left:1076px;top:529px"></div>
<div class="ln" style="top:530px;color:#6e7681">24</div>
<div class="cl" style="left:1107.3px;top:530px"><span style="color:#808080">&lt;</span><span style="color:#569cd6">script</span><span style="color:#808080">&gt;</span></div>
<div class="ir" style="left:1076.5px;top:548px;width:30.8px;background:rgba(255,255,64,0.07)"></div>
<div class="ig" style="left:1076px;top:548px"></div>
<div class="ir" style="left:1107.3px;top:548px;width:30.8px;background:rgba(127,255,127,0.07)"></div>
<div class="ig" style="left:1107px;top:548px"></div>
<div class="ln" style="top:549px;color:#6e7681">25</div>
<div class="cl" style="left:1138.1px;top:549px"><span style="color:#c586c0">for</span><span style="color:#ffd700">(</span><span style="color:#569cd6">var</span><span style="color:#d4d4d4"> </span><span style="color:#9cdcfe">key</span><span style="color:#d4d4d4"> </span><span style="color:#569cd6">in</span><span style="color:#d4d4d4"> </span><span style="color:#9cdcfe">coworkers</span><span style="color:#ffd700">)</span><span style="color:#d4d4d4"> </span><span style="color:#ffd700">{</span></div>
<div class="ir" style="left:1076.5px;top:567px;width:30.8px;background:rgba(255,255,64,0.07)"></div>
<div class="ig" style="left:1076px;top:567px"></div>
<div class="ir" style="left:1107.3px;top:567px;width:30.8px;background:rgba(127,255,127,0.07)"></div>
<div class="ig" style="left:1107px;top:567px"></div>
<div class="ir" style="left:1138.1px;top:567px;width:30.8px;background:rgba(255,127,255,0.07)"></div>
<div class="ig" style="left:1138px;top:567px"></div>
<div class="ln" style="top:568px;color:#6e7681">26</div>
<div class="cl" style="left:1168.9px;top:568px"><span style="color:#9cdcfe">document</span><span style="color:#d4d4d4">.</span><span style="color:#dcdcaa">write</span><span style="color:#da70d6">(</span><span style="color:#9cdcfe">key</span><span style="color:#d4d4d4">+</span><span style="color:#ce9178">' : '</span><span style="color:#d4d4d4">+</span><span style="color:#9cdcfe">coworkers</span><span style="color:#179fff">[</span><span style="color:#9cdcfe">key</span><span style="color:#179fff">]</span><span style="color:#d4d4d4">+</span><span style="color:#ce9178">'&lt;br&gt;'</span><span style="color:#da70d6">)</span><span style="color:#d4d4d4">;</span></div>
<div class="ir" style="left:1076.5px;top:586px;width:30.8px;background:rgba(255,255,64,0.07)"></div>
<div class="ig" style="left:1076px;top:586px"></div>
<div class="ir" style="left:1107.3px;top:586px;width:30.8px;background:rgba(127,255,127,0.07)"></div>
<div class="ig" style="left:1107px;top:586px"></div>
<div class="ln" style="top:587px;color:#6e7681">27</div>
<div class="cl" style="left:1138.1px;top:587px"><span style="color:#ffd700">}</span></div>
<div class="ir" style="left:1076.5px;top:605px;width:30.8px;background:rgba(255,255,64,0.07)"></div>
<div class="ig" style="left:1076px;top:605px"></div>
<div class="ln" style="top:606px;color:#6e7681">28</div>
<div class="cl" style="left:1107.3px;top:606px"><span style="color:#808080">&lt;/</span><span style="color:#569cd6">script</span><span style="color:#808080">&gt;</span></div>
<div class="ir" style="left:1076.5px;top:624px;width:30.8px;background:rgba(255,255,64,0.07)"></div>
<div class="ig" style="left:1076px;top:624px"></div>
<div class="ln" style="top:625px;color:#6e7681">29</div>
<div class="cl" style="left:1107.3px;top:625px"><span style="color:#808080">&lt;</span><span style="color:#569cd6">h2</span><span style="color:#808080">&gt;</span><span style="color:#cccccc">Property &amp; Method</span><span style="color:#808080">&lt;/</span><span style="color:#569cd6">h2</span><span style="color:#808080">&gt;</span></div>
<div class="ir" style="left:1076.5px;top:643px;width:30.8px;background:rgba(255,255,64,0.07)"></div>
<div class="ig" style="left:1076px;top:643px"></div>
<div class="ln" style="top:644px;color:#6e7681">30</div>
<div class="cl" style="left:1107.3px;top:644px"><span style="color:#808080">&lt;</span><span style="color:#569cd6">script</span><span style="color:#808080">&gt;</span></div>
<div class="ir" style="left:1076.5px;top:662px;width:30.8px;background:rgba(255,255,64,0.07)"></div>
<div class="ig" style="left:1076px;top:662px"></div>
<div class="ir" style="left:1107.3px;top:662px;width:30.8px;background:rgba(127,255,127,0.07)"></div>
<div class="ig" style="left:1107px;top:662px"></div>
<div class="ln" style="top:663px;color:#6e7681">31</div>
<div class="cl" style="left:1138.1px;top:663px"><span style="color:#9cdcfe">coworkers</span><span style="color:#d4d4d4">.</span><span style="color:#dcdcaa">showAll</span><span style="color:#d4d4d4"> = </span><span style="color:#569cd6">function</span><span style="color:#ffd700">()</span><span style="color:#ffd700">{</span></div>
<div class="ir" style="left:1076.5px;top:681px;width:30.8px;background:rgba(255,255,64,0.07)"></div>
<div class="ig" style="left:1076px;top:681px"></div>
<div class="ir" style="left:1107.3px;top:681px;width:30.8px;background:rgba(127,255,127,0.07)"></div>
<div class="ig" style="left:1107px;top:681px"></div>
<div class="ir" style="left:1138.1px;top:681px;width:30.8px;background:rgba(255,127,255,0.07)"></div>
<div class="ig" style="left:1138px;top:681px"></div>
<div class="ln" style="top:682px;color:#6e7681">32</div>
<div class="cl" style="left:1168.9px;top:682px"><span style="color:#c586c0">for</span><span style="color:#da70d6">(</span><span style="color:#569cd6">var</span><span style="color:#d4d4d4"> </span><span style="color:#9cdcfe">key</span><span style="color:#d4d4d4"> </span><span style="color:#569cd6">in</span><span style="color:#d4d4d4"> </span><span style="color:#569cd6">this</span><span style="color:#da70d6">)</span><span style="color:#d4d4d4"> </span><span style="color:#da70d6">{</span></div>
<div class="ir" style="left:1076.5px;top:700px;width:30.8px;background:rgba(255,255,64,0.07)"></div>
<div class="ig" style="left:1076px;top:700px"></div>
<div class="ir" style="left:1107.3px;top:700px;width:30.8px;background:rgba(127,255,127,0.07)"></div>
<div class="ig" style="left:1107px;top:700px"></div>
<div class="ir" style="left:1138.1px;top:700px;width:30.8px;background:rgba(255,127,255,0.07)"></div>
<div class="ig" style="left:1138px;top:700px"></div>
<div class="ir" style="left:1168.9px;top:700px;width:30.8px;background:rgba(79,236,236,0.07)"></div>
<div class="ig" style="left:1169px;top:700px"></div>
<div class="ln" style="top:701px;color:#cccccc">33</div>
<div class="cl" style="left:1199.7px;top:701px"><span style="color:#9cdcfe">document</span><span style="color:#d4d4d4">.</span><span style="color:#dcdcaa">write</span><span style="color:#179fff">(</span><span style="color:#9cdcfe">key</span><span style="color:#d4d4d4">+</span><span style="color:#ce9178">' : '</span><span style="color:#d4d4d4">+</span><span style="color:#569cd6">this</span><span style="color:#ffd700">[</span><span style="color:#9cdcfe">key</span><span style="color:#ffd700">]</span><span style="color:#d4d4d4">+</span><span style="color:#ce9178">'&lt;br&gt;'</span><span style="color:#179fff">)</span><span style="color:#d4d4d4">;</span></div>
<div class="ir" style="left:1076.5px;top:719px;width:30.8px;background:rgba(255,255,64,0.07)"></div>
<div class="ig" style="left:1076px;top:719px"></div>
<div class="ir" style="left:1107.3px;top:719px;width:30.8px;background:rgba(127,255,127,0.07)"></div>
<div class="ig" style="left:1107px;top:719px"></div>
<div class="ir" style="left:1138.1px;top:719px;width:30.8px;background:rgba(255,127,255,0.07)"></div>
<div class="ig" style="left:1138px;top:719px"></div>
<div class="ln" style="top:720px;color:#6e7681">34</div>
<div class="cl" style="left:1168.9px;top:720px"><span style="color:#da70d6">}</span></div>
<div class="ir" style="left:1076.5px;top:738px;width:30.8px;background:rgba(255,255,64,0.07)"></div>
<div class="ig" style="left:1076px;top:738px"></div>
<div class="ir" style="left:1107.3px;top:738px;width:30.8px;background:rgba(127,255,127,0.07)"></div>
<div class="ig" style="left:1107px;top:738px"></div>
<div class="ln" style="top:739px;color:#6e7681">35</div>
<div class="cl" style="left:1138.1px;top:739px"><span style="color:#ffd700">}</span></div>
<div class="ir" style="left:1076.5px;top:757px;width:30.8px;background:rgba(255,255,64,0.07)"></div>
<div class="ig" style="left:1076px;top:757px"></div>
<div class="ir" style="left:1107.3px;top:757px;width:30.8px;background:rgba(127,255,127,0.07)"></div>
<div class="ig" style="left:1107px;top:757px"></div>
<div class="ln" style="top:758px;color:#6e7681">36</div>
<div class="cl" style="left:1138.1px;top:758px"><span style="color:#9cdcfe">coworkers</span><span style="color:#d4d4d4">.</span><span style="color:#dcdcaa">showAll</span><span style="color:#ffd700">()</span><span style="color:#d4d4d4">;</span></div>
<div class="ir" style="left:1076.5px;top:776px;width:30.8px;background:rgba(255,255,64,0.07)"></div>
<div class="ig" style="left:1076px;top:776px"></div>
<div class="ln" style="top:777px;color:#6e7681">37</div>
<div class="cl" style="left:1107.3px;top:777px"><span style="color:#808080">&lt;/</span><span style="color:#569cd6">script</span><span style="color:#808080">&gt;</span></div>
<div class="ln" style="top:796px;color:#6e7681">38</div>
<div class="cl" style="left:1076.5px;top:796px"><span style="color:#808080">&lt;/</span><span style="color:#569cd6">body</span><span style="color:#808080">&gt;</span></div>
<div class="ln" style="top:815px;color:#6e7681">39</div>
<div class="cl" style="left:1076.5px;top:815px"><span style="color:#808080">&lt;/</span><span style="color:#569cd6">html</span><span style="color:#808080">&gt;</span></div>
<div class="a" style="left:1168px;top:700px;width:1px;height:19px;background:#8c8c8c"></div>

<!-- minimap -->
<div class="a mm" style="left:1811px;top:92px;width:2px;color:#808080"></div>
<div class="a mm" style="left:1813px;top:92px;width:7px;color:#569cd6"></div>
<div class="a mm" style="left:1821px;top:92px;width:4px;color:#9cdcfe"></div>
<div class="a mm" style="left:1825px;top:92px;width:1px;color:#808080"></div>
<div class="a mm" style="left:1811px;top:94px;width:1px;color:#808080"></div>
<div class="a mm" style="left:1812px;top:94px;width:4px;color:#569cd6"></div>
<div class="a mm" style="left:1817px;top:94px;width:4px;color:#9cdcfe"></div>
<div class="a mm" style="left:1821px;top:94px;width:1px;color:#d4d4d4"></div>
<div class="a mm" style="left:1822px;top:94px;width:4px;color:#ce9178"></div>
<div class="a mm" style="left:1826px;top:94px;width:1px;color:#808080"></div>
<div class="a mm" style="left:1811px;top:96px;width:1px;color:#808080"></div>
<div class="a mm" style="left:1812px;top:96px;width:4px;color:#569cd6"></div>
<div class="a mm" style="left:1816px;top:96px;width:1px;color:#808080"></div>
<div class="a mm" style="left:1815px;top:98px;width:1px;color:#808080"></div>
<div class="a mm" style="left:1816px;top:98px;width:4px;color:#569cd6"></div>
<div class="a mm" style="left:1821px;top:98px;width:7px;color:#9cdcfe"></div>
<div class="a mm" style="left:1828px;top:98px;width:1px;color:#d4d4d4"></div>
<div class="a mm" style="left:1829px;top:98px;width:7px;color:#ce9178"></div>
<div class="a mm" style="left:1836px;top:98px;width:1px;color:#808080"></div>
<div class="a mm" style="left:1815px;top:100px;width:1px;color:#808080"></div>
<div class="a mm" style="left:1816px;top:100px;width:4px;color:#569cd6"></div>
<div class="a mm" style="left:1821px;top:100px;width:4px;color:#9cdcfe"></div>
<div class="a mm" style="left:1825px;top:100px;width:1px;color:#d4d4d4"></div>
<div class="a mm" style="left:1826px;top:100px;width:10px;color:#ce9178"></div>
<div class="a mm" style="left:1837px;top:100px;width:7px;color:#9cdcfe"></div>
<div class="a mm" style="left:1844px;top:100px;width:1px;color:#d4d4d4"></div>
<div class="a mm" style="left:1845px;top:100px;width:20px;color:#ce9178"></div>
<div class="a mm" style="left:1866px;top:100px;width:18px;color:#ce9178"></div>
<div class="a mm" style="left:1884px;top:100px;width:1px;color:#808080"></div>
<div class="a mm" style="left:1815px;top:102px;width:1px;color:#808080"></div>
<div class="a mm" style="left:1816px;top:102px;width:5px;color:#569cd6"></div>
<div class="a mm" style="left:1821px;top:102px;width:1px;color:#808080"></div>
<div class="a mm" style="left:1822px;top:102px;width:8px;color:#cccccc"></div>
<div class="a mm" style="left:1830px;top:102px;width:2px;color:#808080"></div>
<div class="a mm" style="left:1832px;top:102px;width:5px;color:#569cd6"></div>
<div class="a mm" style="left:1837px;top:102px;width:1px;color:#808080"></div>
<div class="a mm" style="left:1811px;top:104px;width:2px;color:#808080"></div>
<div class="a mm" style="left:1813px;top:104px;width:4px;color:#569cd6"></div>
<div class="a mm" style="left:1817px;top:104px;width:1px;color:#808080"></div>
<div class="a mm" style="left:1811px;top:106px;width:1px;color:#808080"></div>
<div class="a mm" style="left:1812px;top:106px;width:4px;color:#569cd6"></div>
<div class="a mm" style="left:1816px;top:106px;width:1px;color:#808080"></div>
<div class="a mm" style="left:1815px;top:108px;width:1px;color:#808080"></div>
<div class="a mm" style="left:1816px;top:108px;width:2px;color:#569cd6"></div>
<div class="a mm" style="left:1818px;top:108px;width:1px;color:#808080"></div>
<div class="a mm" style="left:1819px;top:108px;width:6px;color:#cccccc"></div>
<div class="a mm" style="left:1825px;top:108px;width:2px;color:#808080"></div>
<div class="a mm" style="left:1827px;top:108px;width:2px;color:#569cd6"></div>
<div class="a mm" style="left:1829px;top:108px;width:1px;color:#808080"></div>
<div class="a mm" style="left:1815px;top:110px;width:1px;color:#808080"></div>
<div class="a mm" style="left:1816px;top:110px;width:2px;color:#569cd6"></div>
<div class="a mm" style="left:1818px;top:110px;width:1px;color:#808080"></div>
<div class="a mm" style="left:1819px;top:110px;width:6px;color:#cccccc"></div>
<div class="a mm" style="left:1825px;top:110px;width:2px;color:#808080"></div>
<div class="a mm" style="left:1827px;top:110px;width:2px;color:#569cd6"></div>
<div class="a mm" style="left:1829px;top:110px;width:1px;color:#808080"></div>
<div class="a mm" style="left:1815px;top:112px;width:1px;color:#808080"></div>
<div class="a mm" style="left:1816px;top:112px;width:6px;color:#569cd6"></div>
<div class="a mm" style="left:1822px;top:112px;width:1px;color:#808080"></div>
<div class="a mm" style="left:1819px;top:114px;width:3px;color:#569cd6"></div>
<div class="a mm" style="left:1823px;top:114px;width:9px;color:#9cdcfe"></div>
<div class="a mm" style="left:1833px;top:114px;width:1px;color:#d4d4d4"></div>
<div class="a mm" style="left:1835px;top:114px;width:1px;color:#ffd700"></div>
<div class="a mm" style="left:1823px;top:116px;width:12px;color:#ce9178"></div>
<div class="a mm" style="left:1835px;top:116px;width:1px;color:#d4d4d4"></div>
<div class="a mm" style="left:1837px;top:116px;width:8px;color:#ce9178"></div>
<div class="a mm" style="left:1845px;top:116px;width:1px;color:#d4d4d4"></div>
<div class="a mm" style="left:1823px;top:118px;width:10px;color:#ce9178"></div>
<div class="a mm" style="left:1833px;top:118px;width:1px;color:#d4d4d4"></div>
<div class="a mm" style="left:1835px;top:118px;width:9px;color:#ce9178"></div>
<div class="a mm" style="left:1819px;top:120px;width:1px;color:#ffd700"></div>
<div class="a mm" style="left:1820px;top:120px;width:1px;color:#d4d4d4"></div>
<div class="a mm" style="left:1819px;top:122px;width:8px;color:#9cdcfe"></div>
<div class="a mm" style="left:1827px;top:122px;width:1px;color:#d4d4d4"></div>
<div class="a mm" style="left:1828px;top:122px;width:5px;color:#dcdcaa"></div>
<div class="a mm" style="left:1833px;top:122px;width:1px;color:#ffd700"></div>
<div class="a mm" style="left:1834px;top:122px;width:11px;color:#ce9178"></div>
<div class="a mm" style="left:1846px;top:122px;width:1px;color:#ce9178"></div>
<div class="a mm" style="left:1848px;top:122px;width:1px;color:#ce9178"></div>
<div class="a mm" style="left:1849px;top:122px;width:1px;color:#d4d4d4"></div>
<div class="a mm" style="left:1850px;top:122px;width:9px;color:#9cdcfe"></div>
<div class="a mm" style="left:1859px;top:122px;width:1px;color:#d4d4d4"></div>
<div class="a mm" style="left:1860px;top:122px;width:10px;color:#9cdcfe"></div>
<div class="a mm" style="left:1870px;top:122px;width:1px;color:#d4d4d4"></div>
<div class="a mm" style="left:1871px;top:122px;width:6px;color:#ce9178"></div>
<div class="a mm" style="left:1877px;top:122px;width:1px;color:#ffd700"></div>
<div class="a mm" style="left:1878px;top:122px;width:1px;color:#d4d4d4"></div>
<div class="a mm" style="left:1819px;top:124px;width:8px;color:#9cdcfe"></div>
<div class="a mm" style="left:1827px;top:124px;width:1px;color:#d4d4d4"></div>
<div class="a mm" style="left:1828px;top:124px;width:5px;color:#dcdcaa"></div>
<div class="a mm" style="left:1833px;top:124px;width:1px;color:#ffd700"></div>
<div class="a mm" style="left:1834px;top:124px;width:9px;color:#ce9178"></div>
<div class="a mm" style="left:1844px;top:124px;width:1px;color:#ce9178"></div>
<div class="a mm" style="left:1846px;top:124px;width:1px;color:#ce9178"></div>
<div class="a mm" style="left:1847px;top:124px;width:1px;color:#d4d4d4"></div>
<div class="a mm" style="left:1848px;top:124px;width:9px;color:#9cdcfe"></div>
<div class="a mm" style="left:1857px;top:124px;width:1px;color:#d4d4d4"></div>
<div class="a mm" style="left:1858px;top:124px;width:8px;color:#9cdcfe"></div>
<div class="a mm" style="left:1866px;top:124px;width:1px;color:#d4d4d4"></div>
<div class="a mm" style="left:1867px;top:124px;width:6px;color:#ce9178"></div>
<div class="a mm" style="left:1873px;top:124px;width:1px;color:#ffd700"></div>
<div class="a mm" style="left:1874px;top:124px;width:1px;color:#d4d4d4"></div>
<div class="a mm" style="left:1819px;top:126px;width:9px;color:#9cdcfe"></div>
<div class="a mm" style="left:1828px;top:126px;width:1px;color:#d4d4d4"></div>
<div class="a mm" style="left:1829px;top:126px;width:10px;color:#9cdcfe"></div>
<div class="a mm" style="left:1840px;top:126px;width:1px;color:#d4d4d4"></div>
<div class="a mm" style="left:1842px;top:126px;width:6px;color:#ce9178"></div>
<div class="a mm" style="left:1848px;top:126px;width:1px;color:#d4d4d4"></div>
<div class="a mm" style="left:1819px;top:128px;width:8px;color:#9cdcfe"></div>
<div class="a mm" style="left:1827px;top:128px;width:1px;color:#d4d4d4"></div>
<div class="a mm" style="left:1828px;top:128px;width:5px;color:#dcdcaa"></div>
<div class="a mm" style="left:1833px;top:128px;width:1px;color:#ffd700"></div>
<div class="a mm" style="left:1834px;top:128px;width:11px;color:#ce9178"></div>
<div class="a mm" style="left:1846px;top:128px;width:1px;color:#ce9178"></div>
<div class="a mm" style="left:1848px;top:128px;width:1px;color:#ce9178"></div>
<div class="a mm" style="left:1849px;top:128px;width:1px;color:#d4d4d4"></div>
<div class="a mm" style="left:1850px;top:128px;width:9px;color:#9cdcfe"></div>
<div class="a mm" style="left:1859px;top:128px;width:1px;color:#d4d4d4"></div>
<div class="a mm" style="left:1860px;top:128px;width:10px;color:#9cdcfe"></div>
<div class="a mm" style="left:1870px;top:128px;width:1px;color:#d4d4d4"></div>
<div class="a mm" style="left:1871px;top:128px;width:6px;color:#ce9178"></div>
<div class="a mm" style="left:1877px;top:128px;width:1px;color:#ffd700"></div>
<div class="a mm" style="left:1878px;top:128px;width:1px;color:#d4d4d4"></div>
<div class="a mm" style="left:1819px;top:130px;width:9px;color:#9cdcfe"></div>
<div class="a mm" style="left:1828px;top:130px;width:1px;color:#ffd700"></div>
<div class="a mm" style="left:1829px;top:130px;width:5px;color:#ce9178"></div>
<div class="a mm" style="left:1835px;top:130px;width:10px;color:#ce9178"></div>
<div class="a mm" style="left:1845px;top:130px;width:1px;color:#ffd700"></div>
<div class="a mm" style="left:1847px;top:130px;width:1px;color:#d4d4d4"></div>
<div class="a mm" style="left:1849px;top:130px;width:7px;color:#ce9178"></div>
<div class="a mm" style="left:1856px;top:130px;width:1px;color:#d4d4d4"></div>
<div class="a mm" style="left:1819px;top:132px;width:8px;color:#9cdcfe"></div>
<div class="a mm" style="left:1827px;top:132px;width:1px;color:#d4d4d4"></div>
<div class="a mm" style="left:1828px;top:132px;width:5px;color:#dcdcaa"></div>
<div class="a mm" style="left:1833px;top:132px;width:1px;color:#ffd700"></div>
<div class="a mm" style="left:1834px;top:132px;width:5px;color:#ce9178"></div>
<div class="a mm" style="left:1840px;top:132px;width:9px;color:#ce9178"></div>
<div class="a mm" style="left:1850px;top:132px;width:1px;color:#ce9178"></div>
<div class="a mm" style="left:1852px;top:132px;width:1px;color:#ce9178"></div>
<div class="a mm" style="left:1853px;top:132px;width:1px;color:#d4d4d4"></div>
<div class="a mm" style="left:1854px;top:132px;width:9px;color:#9cdcfe"></div>
<div class="a mm" style="left:1863px;top:132px;width:1px;color:#da70d6"></div>
<div class="a mm" style="left:1864px;top:132px;width:5px;color:#ce9178"></div>
<div class="a mm" style="left:1870px;top:132px;width:10px;color:#ce9178"></div>
<div class="a mm" style="left:1880px;top:132px;width:1px;color:#da70d6"></div>
<div class="a mm" style="left:1881px;top:132px;width:1px;color:#d4d4d4"></div>
<div class="a mm" style="left:1882px;top:132px;width:6px;color:#ce9178"></div>
<div class="a mm" style="left:1888px;top:132px;width:1px;color:#ffd700"></div>
<div class="a mm" style="left:1889px;top:132px;width:1px;color:#d4d4d4"></div>
<div class="a mm" style="left:1815px;top:134px;width:2px;color:#808080"></div>
<div class="a mm" style="left:1817px;top:134px;width:6px;color:#569cd6"></div>
<div class="a mm" style="left:1823px;top:134px;width:1px;color:#808080"></div>
<div class="a mm" style="left:1815px;top:136px;width:1px;color:#808080"></div>
<div class="a mm" style="left:1816px;top:136px;width:2px;color:#569cd6"></div>
<div class="a mm" style="left:1818px;top:136px;width:1px;color:#808080"></div>
<div class="a mm" style="left:1819px;top:136px;width:7px;color:#cccccc"></div>
<div class="a mm" style="left:1826px;top:136px;width:2px;color:#808080"></div>
<div class="a mm" style="left:1828px;top:136px;width:2px;color:#569cd6"></div>
<div class="a mm" style="left:1830px;top:136px;width:1px;color:#808080"></div>
<div class="a mm" style="left:1815px;top:138px;width:1px;color:#808080"></div>
<div class="a mm" style="left:1816px;top:138px;width:6px;color:#569cd6"></div>
<div class="a mm" style="left:1822px;top:138px;width:1px;color:#808080"></div>
<div class="a mm" style="left:1819px;top:140px;width:3px;color:#c586c0"></div>
<div class="a mm" style="left:1822px;top:140px;width:1px;color:#ffd700"></div>
<div class="a mm" style="left:1823px;top:140px;width:3px;color:#569cd6"></div>
<div class="a mm" style="left:1827px;top:140px;width:3px;color:#9cdcfe"></div>
<div class="a mm" style="left:1831px;top:140px;width:2px;color:#569cd6"></div>
<div class="a mm" style="left:1834px;top:140px;width:9px;color:#9cdcfe"></div>
<div class="a mm" style="left:1843px;top:140px;width:1px;color:#ffd700"></div>
<div class="a mm" style="left:1845px;top:140px;width:1px;color:#ffd700"></div>
<div class="a mm" style="left:1823px;top:142px;width:8px;color:#9cdcfe"></div>
<div class="a mm" style="left:1831px;top:142px;width:1px;color:#d4d4d4"></div>
<div class="a mm" style="left:1832px;top:142px;width:5px;color:#dcdcaa"></div>
<div class="a mm" style="left:1837px;top:142px;width:1px;color:#da70d6"></div>
<div class="a mm" style="left:1838px;top:142px;width:3px;color:#9cdcfe"></div>
<div class="a mm" style="left:1841px;top:142px;width:1px;color:#d4d4d4"></div>
<div class="a mm" style="left:1842px;top:142px;width:1px;color:#ce9178"></div>
<div class="a mm" style="left:1844px;top:142px;width:1px;color:#ce9178"></div>
<div class="a mm" style="left:1846px;top:142px;width:1px;color:#ce9178"></div>
<div class="a mm" style="left:1847px;top:142px;width:1px;color:#d4d4d4"></div>
<div class="a mm" style="left:1848px;top:142px;width:9px;color:#9cdcfe"></div>
<div class="a mm" style="left:1857px;top:142px;width:1px;color:#179fff"></div>
<div class="a mm" style="left:1858px;top:142px;width:3px;color:#9cdcfe"></div>
<div class="a mm" style="left:1861px;top:142px;width:1px;color:#179fff"></div>
<div class="a mm" style="left:1862px;top:142px;width:1px;color:#d4d4d4"></div>
<div class="a mm" style="left:1863px;top:142px;width:6px;color:#ce9178"></div>
<div class="a mm" style="left:1869px;top:142px;width:1px;color:#da70d6"></div>
<div class="a mm" style="left:1870px;top:142px;width:1px;color:#d4d4d4"></div>
<div class="a mm" style="left:1819px;top:144px;width:1px;color:#ffd700"></div>
<div class="a mm" style="left:1815px;top:146px;width:2px;color:#808080"></div>
<div class="a mm" style="left:1817px;top:146px;width:6px;color:#569cd6"></div>
<div class="a mm" style="left:1823px;top:146px;width:1px;color:#808080"></div>
<div class="a mm" style="left:1815px;top:148px;width:1px;color:#808080"></div>
<div class="a mm" style="left:1816px;top:148px;width:2px;color:#569cd6"></div>
<div class="a mm" style="left:1818px;top:148px;width:1px;color:#808080"></div>
<div class="a mm" style="left:1819px;top:148px;width:8px;color:#cccccc"></div>
<div class="a mm" style="left:1828px;top:148px;width:1px;color:#cccccc"></div>
<div class="a mm" style="left:1830px;top:148px;width:6px;color:#cccccc"></div>
<div class="a mm" style="left:1836px;top:148px;width:2px;color:#808080"></div>
<div class="a mm" style="left:1838px;top:148px;width:2px;color:#569cd6"></div>
<div class="a mm" style="left:1840px;top:148px;width:1px;color:#808080"></div>
<div class="a mm" style="left:1815px;top:150px;width:1px;color:#808080"></div>
<div class="a mm" style="left:1816px;top:150px;width:6px;color:#569cd6"></div>
<div class="a mm" style="left:1822px;top:150px;width:1px;color:#808080"></div>
<div class="a mm" style="left:1819px;top:152px;width:9px;color:#9cdcfe"></div>
<div class="a mm" style="left:1828px;top:152px;width:1px;color:#d4d4d4"></div>
<div class="a mm" style="left:1829px;top:152px;width:7px;color:#dcdcaa"></div>
<div class="a mm" style="left:1837px;top:152px;width:1px;color:#d4d4d4"></div>
<div class="a mm" style="left:1839px;top:152px;width:8px;color:#569cd6"></div>
<div class="a mm" style="left:1847px;top:152px;width:2px;color:#ffd700"></div>
<div class="a mm" style="left:1849px;top:152px;width:1px;color:#ffd700"></div>
<div class="a mm" style="left:1823px;top:154px;width:3px;color:#c586c0"></div>
<div class="a mm" style="left:1826px;top:154px;width:1px;color:#da70d6"></div>
<div class="a mm" style="left:1827px;top:154px;width:3px;color:#569cd6"></div>
<div class="a mm" style="left:1831px;top:154px;width:3px;color:#9cdcfe"></div>
<div class="a mm" style="left:1835px;top:154px;width:2px;color:#569cd6"></div>
<div class="a mm" style="left:1838px;top:154px;width:4px;color:#569cd6"></div>
<div class="a mm" style="left:1842px;top:154px;width:1px;color:#da70d6"></div>
<div class="a mm" style="left:1844px;top:154px;width:1px;color:#da70d6"></div>
<div class="a mm" style="left:1827px;top:156px;width:8px;color:#9cdcfe"></div>
<div class="a mm" style="left:1835px;top:156px;width:1px;color:#d4d4d4"></div>
<div class="a mm" style="left:1836px;top:156px;width:5px;color:#dcdcaa"></div>
<div class="a mm" style="left:1841px;top:156px;width:1px;color:#179fff"></div>
<div class="a mm" style="left:1842px;top:156px;width:3px;color:#9cdcfe"></div>
<div class="a mm" style="left:1845px;top:156px;width:1px;color:#d4d4d4"></div>
<div class="a mm" style="left:1846px;top:156px;width:1px;color:#ce9178"></div>
<div class="a mm" style="left:1848px;top:156px;width:1px;color:#ce9178"></div>
<div class="a mm" style="left:1850px;top:156px;width:1px;color:#ce9178"></div>
<div class="a mm" style="left:1851px;top:156px;width:1px;color:#d4d4d4"></div>
<div class="a mm" style="left:1852px;top:156px;width:4px;color:#569cd6"></div>
<div class="a mm" style="left:1856px;top:156px;width:1px;color:#ffd700"></div>
<div class="a mm" style="left:1857px;top:156px;width:3px;color:#9cdcfe"></div>
<div class="a mm" style="left:1860px;top:156px;width:1px;color:#ffd700"></div>
<div class="a mm" style="left:1861px;top:156px;width:1px;color:#d4d4d4"></div>
<div class="a mm" style="left:1862px;top:156px;width:6px;color:#ce9178"></div>
<div class="a mm" style="left:1868px;top:156px;width:1px;color:#179fff"></div>
<div class="a mm" style="left:1869px;top:156px;width:1px;color:#d4d4d4"></div>
<div class="a mm" style="left:1823px;top:158px;width:1px;color:#da70d6"></div>
<div class="a mm" style="left:1819px;top:160px;width:1px;color:#ffd700"></div>
<div class="a mm" style="left:1819px;top:162px;width:9px;color:#9cdcfe"></div>
<div class="a mm" style="left:1828px;top:162px;width:1px;color:#d4d4d4"></div>
<div class="a mm" style="left:1829px;top:162px;width:7px;color:#dcdcaa"></div>
<div class="a mm" style="left:1836px;top:162px;width:2px;color:#ffd700"></div>
<div class="a mm" style="left:1838px;top:162px;width:1px;color:#d4d4d4"></div>
<div class="a mm" style="left:1815px;top:164px;width:2px;color:#808080"></div>
<div class="a mm" style="left:1817px;top:164px;width:6px;color:#569cd6"></div>
<div class="a mm" style="left:1823px;top:164px;width:1px;color:#808080"></div>
<div class="a mm" style="left:1811px;top:166px;width:2px;color:#808080"></div>
<div class="a mm" style="left:1813px;top:166px;width:4px;color:#569cd6"></div>
<div class="a mm" style="left:1817px;top:166px;width:1px;color:#808080"></div>
<div class="a mm" style="left:1811px;top:168px;width:2px;color:#808080"></div>
<div class="a mm" style="left:1813px;top:168px;width:4px;color:#569cd6"></div>
<div class="a mm" style="left:1817px;top:168px;width:1px;color:#808080"></div>
<div class="a" style="left:1906px;top:92px;width:1px;height:918px;background:#141414"></div><div class="a" style="left:1906px;top:92px;width:12px;height:1px;background:#141414"></div>
<div class="a" style="left:1907px;top:431px;width:11px;height:2px;background:#a0a0a0"></div>

<!-- status bar -->
<div class="a" style="left:961px;top:1010px;width:957px;height:20px;background:#181818;border-top:1px solid #2b2b2b"></div>
<svg style="left:971px;top:1013px" width="12" height="15" viewBox="0 0 12 15"><path d="M0.4 6 L5.2 9.6 L0.4 13.6 M10.6 1 L5.6 4.8 L10.6 8.4" fill="none" stroke="#cccccc" stroke-width="1.1"/></svg><svg style="left:1002px;top:1013px" width="15" height="15" viewBox="0 0 15 15"><circle cx="3" cy="2.5" r="1.8" fill="none" stroke="#ccc" stroke-width="1"/><circle cx="3" cy="12.5" r="1.8" fill="none" stroke="#ccc" stroke-width="1"/><path d="M3 4.3 V10.7" stroke="#ccc"/><circle cx="9.5" cy="5.5" r="1.8" fill="none" stroke="#ccc" stroke-width="1"/><circle cx="10" cy="11" r="4" fill="#ccc"/><path d="M10 8.8 V13.2 M8 10 L12 12 M12 10 L8 12" stroke="#181818" stroke-width="0.8"/></svg><div class="sb" style="left:1020px;">main*</div><svg style="left:1057px;top:1014px" width="17" height="14" viewBox="0 0 17 14"><path d="M9 10.5 H4 C2.3 10.5 1 9.2 1 7.5 C1 5.9 2.2 4.7 3.7 4.5 C4.2 2.5 6 1 8 1 C10.2 1 12 2.6 12.3 4.8" fill="none" stroke="#ccc" stroke-width="1"/><circle cx="12" cy="10" r="4" fill="#ccc"/><path d="M12 12.5 V8 M10.2 9.8 L12 8 L13.8 9.8" fill="none" stroke="#181818" stroke-width="1"/></svg><svg style="left:1089px;top:1013px" width="15" height="15" viewBox="0 0 15 15"><circle cx="7.5" cy="7.5" r="6.6" fill="none" stroke="#ccc" stroke-width="1"/><path d="M5 5 L10 10 M10 5 L5 10" stroke="#ccc" stroke-width="1"/></svg><div class="sb" style="left:1107px;">0</div><svg style="left:1118px;top:1013px" width="15" height="15" viewBox="0 0 15 15"><path d="M7.5 1 L14 13.5 H1 Z" fill="none" stroke="#ccc" stroke-width="1" stroke-linejoin="round"/><path d="M7.5 5 V9.5 M7.5 10.8 V12" stroke="#ccc" stroke-width="1"/></svg><div class="sb" style="left:1136px;">0</div><div class="sb" style="left:1323px;">Ln 33, Col 46</div><div class="sb" style="left:1406px;">Spaces: 4</div><div class="sb" style="left:1472px;">UTF-8</div><div class="sb" style="left:1519px;">CRLF</div><svg style="left:1563px;top:1013px" width="15" height="15" viewBox="0 0 15 15"><path d="M4 1.5 C2.5 1.5 2.5 2.5 2.5 4 V6 C2.5 7 1.5 7.5 1 7.5 C1.5 7.5 2.5 8 2.5 9 V11 C2.5 12.5 2.5 13.5 4 13.5 M10 1.5 C11.5 1.5 11.5 2.5 11.5 4 V5" fill="none" stroke="#ccc" stroke-width="1"/><circle cx="11" cy="11" r="3" fill="none" stroke="#ccc" stroke-width="1.2"/><circle cx="11" cy="11" r="1" fill="#ccc"/></svg><div class="sb" style="left:1584px;">HTML</div><div class="a" style="left:1623px;top:1011px;width:99px;height:19px;background:#31353a"></div><svg style="left:1630px;top:1013px" width="17" height="15" viewBox="0 0 17 15"><rect x="2" y="1" width="5.6" height="5.2" rx="2.2" fill="none" stroke="#d0d0d0" stroke-width="1.3"/><rect x="9.4" y="1" width="5.6" height="5.2" rx="2.2" fill="none" stroke="#d0d0d0" stroke-width="1.3"/><path d="M2 5.6 C1 6.4 0.9 7.6 1 9 V10.8 C1 12.8 4.4 14.2 8.5 14.2 C12.6 14.2 16 12.8 16 10.8 V9 C16.1 7.6 16 6.4 15 5.6" fill="none" stroke="#d0d0d0" stroke-width="1.3"/><rect x="5.6" y="8.6" width="1.4" height="3" fill="#d0d0d0"/><rect x="10" y="8.6" width="1.4" height="3" fill="#d0d0d0"/></svg><div class="sb" style="left:1651px;">Finish Setup</div><svg style="left:1731px;top:1013px" width="16" height="15" viewBox="0 0 16 15"><circle cx="8" cy="7.5" r="6.6" fill="none" stroke="#ccc" stroke-width="1.1"/><path d="M3.5 12 L12.5 3" stroke="#ccc" stroke-width="1.1"/></svg><div class="sb" style="left:1750px;">Port : 5500</div><svg style="left:1822px;top:1014px" width="16" height="12" viewBox="0 0 16 12"><path d="M1 6 L4.5 10 L11 1.5 M7 9 L8 10 L15 1.5" fill="none" stroke="#ccc" stroke-width="1.1"/></svg><div class="sb" style="left:1842px;">Prettier</div><svg style="left:1897px;top:1012px" width="16" height="16" viewBox="0 0 16 16"><path d="M2 12.5 H14 L12.5 10.5 V7 C12.5 4.5 10.5 2.5 8 2.5 C5.5 2.5 3.5 4.5 3.5 7 V10.5 Z" fill="none" stroke="#ccc" stroke-width="1"/><path d="M6.5 14 C6.8 14.8 7.3 15 8 15 C8.7 15 9.2 14.8 9.5 14" fill="none" stroke="#ccc"/><circle cx="13" cy="3" r="2.6" fill="#ccc"/></svg>

</body></html>
